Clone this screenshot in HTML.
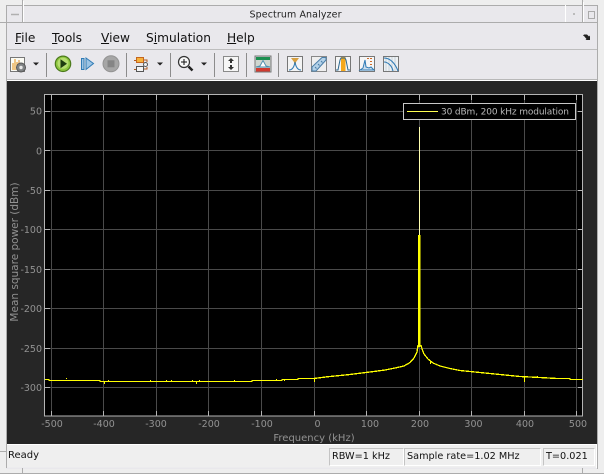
<!DOCTYPE html>
<html><head><meta charset="utf-8"><style>
html,body{margin:0;padding:0;background:#e9e8ec}
body{width:604px;height:474px;overflow:hidden;position:relative;font-family:"DejaVu Sans","Liberation Sans",sans-serif}
div{position:absolute}
.m{top:30px;font-size:12.2px;color:#111;line-height:16px}
.m u{text-decoration:underline}
.s{top:448px;height:16px;background:#efefef;border:1px solid #c4c4c4;border-right-color:#fff;border-bottom-color:#fff;font-size:9.7px;line-height:16px;color:#111;box-sizing:content-box}
</style></head><body>
<svg width="604" height="474" style="position:absolute;left:0;top:0" xmlns="http://www.w3.org/2000/svg" font-family="DejaVu Sans, Liberation Sans, sans-serif">
<!-- window frame -->
<rect x="0" y="0" width="604" height="474" fill="#eeeeee"/>
<rect x="6" y="6" width="592" height="463" fill="#e9e8ec"/>
<path d="M6 5.500H598M6 22.500H598M6.500 5V468M597.500 5V469M0 22.500H6M22.500 0V22M582.500 0V22M0 451.500H6M0 473.500H604M22.500 468V474M582.500 468V474" stroke="#acacac" fill="none"/>
<path d="M23.500 1V22M565.500 5V22M583.500 2V22" stroke="#fff" fill="none"/>
<path d="M11 14.500H19" stroke="#b0b0b0" stroke-width="1.500"/>
<rect x="588.500" y="11.500" width="6" height="7" fill="none" stroke="#aaa"/>
<rect x="573" y="13" width="2" height="2" fill="#bbb"/>
<text x="295.500" y="17.500" text-anchor="middle" font-size="9.500" fill="#222" textLength="92">Spectrum Analyzer</text>
<path d="M7 49.500H597" stroke="#bdbdbd"/>
<path d="M7 79.500H597" stroke="#b8b8b8"/>
<path d="M7 80.500H597" stroke="#fff"/>
<!-- expander arrow -->
<path d="M584 34.500h3l2 2 1-1v4.500h-4.500l1-1-2.500-3h-1zM584 36l2 0 0 1z" fill="#222"/>
<!-- separators -->
<path d="M46.500 53V77M126.500 53V77M170.500 53V77M214.500 53V77M246.500 53V77M278.500 53V77" stroke="#8c8c8c"/>
<!-- icon 1 -->
<rect x="10.500" y="57.500" width="14" height="14" fill="#fbfbf4" stroke="#777"/>
<path d="M13 70V63M15 70V59M17 70V62" stroke="#e8a43c" stroke-width="1.200"/>
<path d="M19 66V60" stroke="#d88a30"/>
<circle cx="21" cy="67.500" r="4.500" fill="#7f8284" stroke="#555"/><circle cx="21" cy="67.500" r="1.700" fill="#e8e8e8"/>
<path d="M33 62.500h6l-3 3z" fill="#222"/>
<!-- play -->
<circle cx="63" cy="63.800" r="7.700" fill="#8dc63f" stroke="#4c7a1c" stroke-width="1.200"/>
<circle cx="63" cy="63.300" r="5.500" fill="#b6dd70"/>
<path d="M60.500 59.300l6.500 4.500-6.500 4.500z" fill="#1f3d10"/>
<!-- step -->
<rect x="81.500" y="58.500" width="2.500" height="11" fill="#9cc4e4" stroke="#2f7bb5"/>
<path d="M86 58l7.500 5.500-7.500 6z" fill="#9cc4e4" stroke="#2f7bb5"/>
<!-- stop -->
<circle cx="111" cy="63.800" r="8" fill="#a6a6a6" stroke="#939393"/>
<rect x="107.500" y="60.300" width="7" height="7" fill="#858585"/>
<!-- block -->
<rect x="136.500" y="57.500" width="7" height="5" fill="#f6b13c" stroke="#c4661e"/>
<rect x="136.500" y="66.500" width="7" height="5" fill="#f4f4f4" stroke="#555"/>
<circle cx="145.500" cy="64.500" r="2" fill="#f4f4f4" stroke="#555"/>
<path d="M134 60.500H136M144 60H147V62M144 69H147V67M134 69.500H136" stroke="#b05a20" fill="none"/>
<path d="M157 62.500h6l-3 3z" fill="#222"/>
<!-- zoom -->
<circle cx="184" cy="62" r="5.500" fill="#f8f8f8" stroke="#333" stroke-width="1.200"/>
<path d="M181 62H187M184 59V65" stroke="#111"/>
<path d="M188.500 66.500L192.500 70.500" stroke="#222" stroke-width="2.500"/>
<path d="M201 62.500h6l-3 3z" fill="#222"/>
<!-- scale -->
<rect x="223.500" y="56.500" width="15" height="15" fill="#f6f6f6" stroke="#8a8a8a"/>
<path d="M231 58l-3 3h2v2h2v-2h2zM231 70l-3-3h2v-2h2v2h2z" fill="#333"/>
<!-- style -->
<rect x="255" y="56" width="16" height="16" fill="#cfd6d0" stroke="#777"/>
<rect x="256" y="57" width="14" height="3" fill="#1c8f50"/>
<rect x="256" y="68" width="14" height="3.500" fill="#d03a30"/>
<path d="M256 67L260 66L263 60.500L266 66L270 67z" fill="#fff" stroke="#4f8fb0"/>
<!-- measurement icons -->
<rect x="287.500" y="56.500" width="15" height="15" fill="#f4f4f4" stroke="#777"/>
<path d="M291 58h8l-3 4v2h-2v-2z" fill="#d8a040"/>
<path d="M289 70C292 70 294 68 295 62C296 68 298 70 301 70" stroke="#2f7bb5" fill="none"/>
<rect x="311.500" y="56.500" width="15" height="15" fill="#efefef" stroke="#888"/>
<path d="M312 67L322 57.500H326V60L316 71H312z" fill="#b5d2e8" stroke="#4a7ea8"/>
<path d="M315 67l1.500 1.500M318 64l1.500 1.500M321 61l1.500 1.500" stroke="#4a7ea8"/>
<rect x="335.500" y="56.500" width="15" height="15" fill="#f6f6f6" stroke="#777"/>
<rect x="341" y="57" width="4.500" height="14" fill="#f5a81c"/>
<path d="M336 70H338L340 60L341 58H345L346 60L348 70H350" stroke="#2d6890" fill="none"/>
<rect x="359.500" y="56.500" width="15" height="15" fill="#f6f6f6" stroke="#777"/>
<path d="M360 70L363 68L365 60L366 67L369 68L371 67L374 70z" fill="#cfe0ee" stroke="#2f7bb5"/>
<path d="M367 58.500H373M370 61.500H373M370 64.500H373" stroke="#d06a28" stroke-dasharray="2 1"/>
<rect x="383.500" y="56.500" width="15" height="15" fill="#eef1f3" stroke="#777"/>
<path d="M386 57V71M389 57V71M392 57V71M395 57V71" stroke="#c8d4dc"/>
<path d="M384 58C390 58 395 63 398 71M384 62C388 62 392 66 393 71" stroke="#2f7bb5" fill="none" stroke-width="1.100"/>
<!-- plot bg -->
<rect x="7" y="81" width="590" height="363" fill="#262626"/>
<rect x="45" y="95" width="538" height="321" fill="#000"/>
<!-- grid -->
<g stroke="#4a4a4a">
<path d="M45 111.500H583M45 150.500H583M45 190.500H583M45 229.500H583M45 269.500H583M45 308.500H583M45 348.500H583M45 387.500H583"/>
<path d="M51.500 95V416M103.500 95V416M156.500 95V416M208.500 95V416M261.500 95V416M314.500 95V416M366.500 95V416M419.500 95V416M471.500 95V416M524.500 95V416M576.500 95V416"/>
</g>
<rect x="44.500" y="94.500" width="538" height="321.500" fill="none" stroke="#b4b4b4"/>
<g stroke="#b4b4b4">
<path d="M51.500 95v5M103.500 95v5M156.500 95v5M208.500 95v5M261.500 95v5M314.500 95v5M366.500 95v5M419.500 95v5M471.500 95v5M524.500 95v5M576.500 95v5"/>
<path d="M51.500 411v5M103.500 411v5M156.500 411v5M208.500 411v5M261.500 411v5M314.500 411v5M366.500 411v5M419.500 411v5M471.500 411v5M524.500 411v5M576.500 411v5"/>
<path d="M45 111.500h5M45 150.500h5M45 190.500h5M45 229.500h5M45 269.500h5M45 308.500h5M45 348.500h5M45 387.500h5"/>
<path d="M578 111.500h5M578 150.500h5M578 190.500h5M578 229.500h5M578 269.500h5M578 308.500h5M578 348.500h5M578 387.500h5"/>
</g>
<!-- axis labels -->
<g font-size="9.500" fill="#929292" text-anchor="end">
<text x="42" y="114.500">50</text><text x="42" y="154.500">0</text><text x="42" y="194">-50</text><text x="42" y="233">-100</text><text x="42" y="273">-150</text><text x="42" y="312">-200</text><text x="42" y="352">-250</text><text x="42" y="391">-300</text>
</g>
<g font-size="9.500" fill="#929292" text-anchor="middle">
<text x="52" y="427">-500</text><text x="104" y="427">-400</text><text x="156" y="427">-300</text><text x="209" y="427">-200</text><text x="262" y="427">-100</text><text x="317.500" y="427">0</text><text x="370" y="427">100</text><text x="420" y="427">200</text><text x="473.500" y="427">300</text><text x="525" y="427">400</text><text x="578" y="427">500</text>
</g>
<text x="314" y="441" text-anchor="middle" font-size="10" fill="#929292">Frequency (kHz)</text>
<text x="18" y="252" text-anchor="middle" font-size="10.500" fill="#929292" transform="rotate(-90 18 252)">Mean square power (dBm)</text>
<!-- trace -->
<g shape-rendering="crispEdges" fill="none" stroke="#ffff00" stroke-width="1.300">
<path d="M45 379.500H49V380.500H100V381.500H252V380.500H282V379.500H298V378.500H314L330 376.500L350 374.500L370 372L385 370L395 368L404 366L410 362.500L414 358L417 352L418 345M421 345L422 349L424 354L428 359L433 363L440 366L450 368.500L460 370.500L480 372.500L500 374.500L520 376.500L540 377.500L557 378.500H570V379.500H583"/>
<path d="M66.500 379v-1M104.500 381v3M108.500 381v-1M150.500 381v-1M166.500 381v-1M171.500 381v-1M192.500 381v-1M196.500 381v3M199.500 381v-1M234.500 381v-1M276.500 380v-1M284.500 380v1M314.500 378v4M326.500 377v-1M430.500 361v3M524.500 377v5M537.500 378v-2M562.500 379v-1"/>
</g>
<rect x="418" y="235" width="2.500" height="112" fill="#ffff00"/>
<rect x="419" y="127" width="1" height="108" fill="#ffffb0"/>
<!-- legend -->
<rect x="403.500" y="103.500" width="172" height="16" fill="#000" stroke="#c8c8c8"/>
<path d="M407 111.500H438" stroke="#ffff50"/>
<text x="441" y="114.500" font-size="9" fill="#b8b8b8" textLength="128">30 dBm, 200 kHz modulation</text>
<!-- status -->
<rect x="7" y="444" width="590" height="23.500" fill="#efefef"/>
<path d="M7 444.500H597" stroke="#fff"/>
<path d="M596.500 444V468" stroke="#fff"/>
</svg>
<div class="m" style="left:15px"><u>F</u>ile</div>
<div class="m" style="left:52px"><u>T</u>ools</div>
<div class="m" style="left:101px"><u>V</u>iew</div>
<div class="m" style="left:146px">S<u>i</u>mulation</div>
<div class="m" style="left:227px"><u>H</u>elp</div>
<div style="left:8px;top:448px;font-size:10px;line-height:16px;color:#111">Ready</div>
<div class="s" style="left:329px;width:71px;padding-left:2px">RBW=1 kHz</div>
<div class="s" style="left:404px;width:133px;padding-left:2px;white-space:nowrap">Sample rate=1.02 MHz</div>
<div class="s" style="left:543px;width:48px;padding-left:2px">T=0.021</div>
</body></html>
